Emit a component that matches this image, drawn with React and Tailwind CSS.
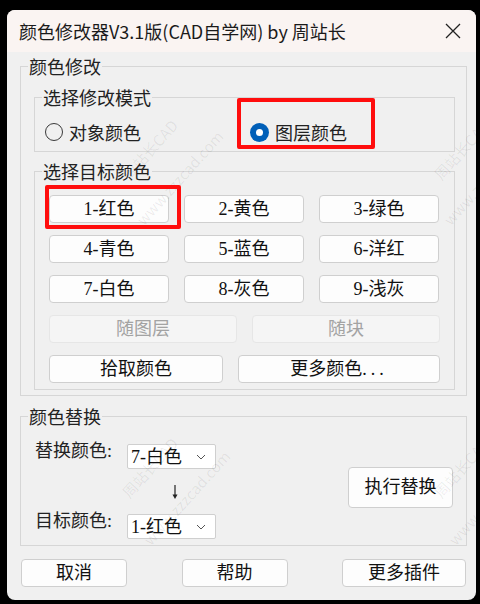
const cjk = { fontFamily: '"Noto Sans CJK SC", "Noto Sans", sans-serif' };
const mixed = { fontFamily: '"Liberation Serif", "Noto Sans CJK SC", serif' };

const Btn = ({ children, className = '', disabled = false }) => (
  <button
    className={`h-[28px] rounded-[4px] border text-[18px] leading-none ${
      disabled ? 'bg-[#f5f5f5] border-[#e6e6e6] text-[#a3a3a3]' : 'bg-[#fdfdfd] border-[#cfcfcf] text-[#111]'
    } ${className}`}
    style={mixed}
  >
    {children}
  </button>
);

const Group = ({ title, className = '', children }) => (
  <fieldset className={`border border-[#d6d6d6] p-0 ${className}`}>
    <legend className="ml-[7px] px-[1px] text-[18px] leading-[22px] text-[#222]" style={cjk}>
      {title}
    </legend>
    {children}
  </fieldset>
);

const Select = ({ value }) => (
  <div className="flex items-center justify-between w-[89px] h-[25px] bg-white border border-[#cfcfcf] rounded-[2px] pl-[3px] pr-[9px]">
    <span className="text-[18px] leading-none text-[#111]" style={mixed}>{value}</span>
    <svg width="10" height="6" viewBox="0 0 10 6" fill="none" stroke="#555" strokeWidth="1">
      <path d="M1 1l4 4 4-4" />
    </svg>
  </div>
);

const marks = [
  ['left-[143px] top-[140px]', '周站长CAD'],
  ['left-[173px] top-[168px]', 'www.zzzcad.com'],
  ['left-[143px] top-[458px]', '周站长CAD'],
  ['left-[180px] top-[488px]', 'www.zzzcad.com'],
  ['left-[455px] top-[140px]', '周站长CAD'],
  ['left-[480px] top-[168px]', 'www.zzzcad.com'],
  ['left-[455px] top-[458px]', '周站长CAD'],
  ['left-[485px] top-[488px]', 'www.zzzcad.com'],
];

export default function App() {
  return (
    <div className="w-[480px] h-[604px] bg-black pt-[10px] pl-[7px]">
      <div className="relative w-[469px] h-[590px] rounded-[8px] overflow-hidden bg-[#f0f0f0]">
        {/* title bar */}
        <div className="flex items-center justify-between h-[42px] bg-[#faf4f2] pl-[12px] pr-[15px]">
          <span className="text-[18px] leading-none text-[#1a1a1a]" style={cjk}>
            颜色修改器V3.1版(CAD自学网) by 周站长
          </span>
          <svg width="16" height="16" viewBox="0 0 16 16" stroke="#222" strokeWidth="1.3">
            <path d="M1 1l14 14M15 1L1 15" />
          </svg>
        </div>

        <Group title="颜色修改" className="mt-[3px] ml-[13px] mr-[9px]">
          <div className="pl-[13px] pr-[11px] pb-[5px]">
            <Group title="选择修改模式" className="mt-[9px]">
              <div className="flex items-center pl-[10px] pt-[14px] pb-[9px]">
                <div className="flex items-center gap-[6px] w-[205px]">
                  <span className="w-[18px] h-[18px] rounded-full border border-[#3a3a3a]" />
                  <span className="text-[18px] leading-[20px] text-[#222]" style={cjk}>对象颜色</span>
                </div>
                <div className="flex items-center gap-[6px]">
                  <span className="flex items-center justify-center w-[19px] h-[19px] rounded-full bg-[#005fb8]">
                    <span className="w-[7px] h-[7px] rounded-full bg-white" />
                  </span>
                  <span className="text-[18px] leading-[20px] text-[#222]" style={cjk}>图层颜色</span>
                </div>
              </div>
            </Group>

            <Group title="选择目标颜色" className="mt-[8px]">
              <div className="flex flex-col gap-[12px] pl-[14px] pt-[13px] pb-[6px]">
                <div className="flex gap-[15px]">
                  <Btn className="w-[120px]">1-红色</Btn>
                  <Btn className="w-[120px]">2-黄色</Btn>
                  <Btn className="w-[120px]">3-绿色</Btn>
                </div>
                <div className="flex gap-[15px]">
                  <Btn className="w-[120px]">4-青色</Btn>
                  <Btn className="w-[120px]">5-蓝色</Btn>
                  <Btn className="w-[120px]">6-洋红</Btn>
                </div>
                <div className="flex gap-[15px]">
                  <Btn className="w-[120px]">7-白色</Btn>
                  <Btn className="w-[120px]">8-灰色</Btn>
                  <Btn className="w-[120px]">9-浅灰</Btn>
                </div>
                <div className="flex gap-[15px]">
                  <Btn disabled className="w-[188px]">随图层</Btn>
                  <Btn disabled className="w-[188px]">随块</Btn>
                </div>
                <div className="flex gap-[15px]">
                  <Btn className="w-[174px]">拾取颜色</Btn>
                  <Btn className="w-[202px]">
                    更多颜色<span className="tracking-[4px]">...</span>
                  </Btn>
                </div>
              </div>
            </Group>
          </div>
        </Group>

        <Group title="颜色替换" className="mt-[9px] ml-[13px] mr-[9px]">
          <div className="flex">
            <div className="grid grid-cols-[92px_89px] pl-[14px] pt-[17px] pb-[6px]">
              <span className="text-[18px] leading-[18px] -mt-[2px] text-[#222]" style={mixed}>替换颜色:</span>
              <Select value="7-白色" />
              <span />
              <div className="flex justify-center h-[45px] items-center">
                <svg width="8" height="16" viewBox="0 0 8 16" className="ml-[6px]">
                  <path d="M4 1v11" stroke="#222" strokeWidth="1.2" />
                  <path d="M1.5 10.5L4 15l2.5-4.5z" fill="#222" />
                </svg>
              </div>
              <span className="text-[18px] leading-[18px] -mt-[2px] text-[#222]" style={mixed}>目标颜色:</span>
              <Select value="1-红色" />
            </div>
            <button
              className="ml-auto mr-[13px] mt-[40px] self-start w-[105px] h-[41px] rounded-[4px] border border-[#cfcfcf] bg-[#fdfdfd] text-[18px] text-[#111]"
              style={mixed}
            >
              执行替换
            </button>
          </div>
        </Group>

        <div className="flex justify-between pl-[14px] pr-[10px] mt-[13px]">
          <Btn className="w-[106px]">取消</Btn>
          <Btn className="w-[106px]">帮助</Btn>
          <Btn className="w-[124px]">更多插件</Btn>
        </div>

        {/* watermark */}
        {marks.map(([pos, text], i) => (
          <span
            key={i}
            className={`pointer-events-none absolute ${pos} -translate-x-1/2 -translate-y-1/2 -rotate-[48deg] whitespace-nowrap text-[15px] text-black/[0.07]`}
            style={cjk}
          >
            {text}
          </span>
        ))}

        {/* red annotation boxes */}
        <div className="pointer-events-none absolute left-[230px] top-[88px] w-[138px] h-[51px] border-[4px] border-[#ff0d0d] rounded-[2px]" />
        <div className="pointer-events-none absolute left-[38px] top-[175px] w-[136px] h-[44px] border-[4px] border-[#ff0d0d] rounded-[2px]" />
      </div>
    </div>
  );
}
